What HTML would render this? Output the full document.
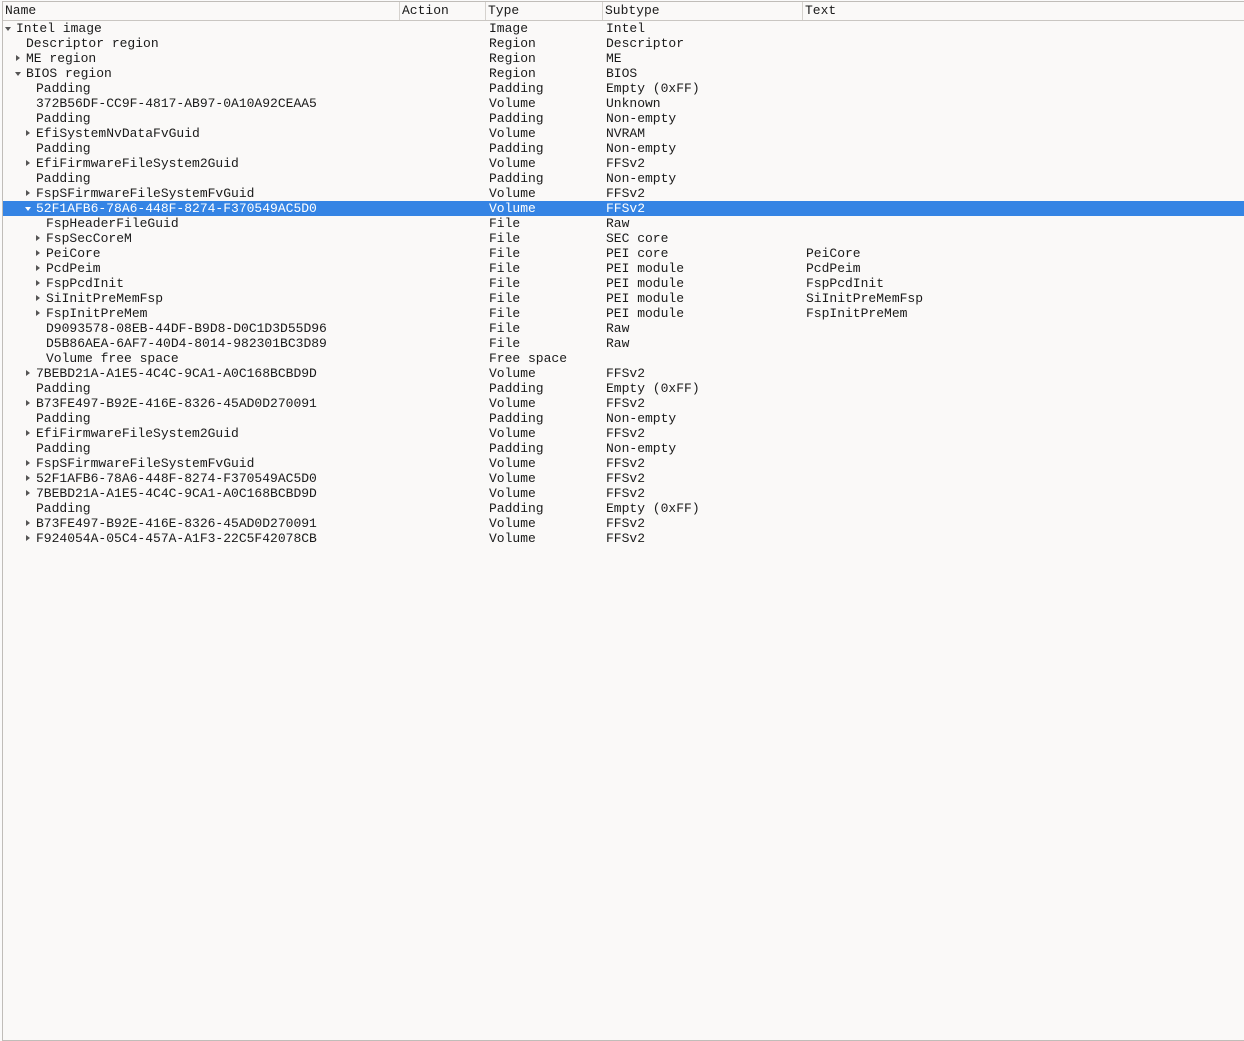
<!DOCTYPE html>
<html><head><style>
body{margin:0;width:1244px;height:1041px;background:#fafafa;overflow:hidden;position:relative;font-family:"Liberation Mono",monospace;font-size:13px;color:#1a1a1a}
#frame{position:absolute;left:2px;top:1px;width:1244px;height:1038px;border-left:1px solid #c0bdb9;border-top:1px solid #c0bdb9;border-bottom:1px solid #c0bdb9;background:#faf9f8}
.hdr{position:absolute;top:2px;height:18px;border-bottom:1px solid #c9c6c2;font-family:"Liberation Mono",monospace;font-size:13px;line-height:18px;left:3px;width:1241px;background:#faf9f8}
.hdr span{position:absolute;top:0;height:18px;padding-left:2px;border-right:1px solid #d5d2ce;box-sizing:border-box}
.row{position:absolute;left:3px;width:1241px;height:15px;line-height:15px;white-space:pre}
.row span{position:absolute;top:0}
.sel{background:#3584e4;color:#fff}
.a{position:absolute;top:5px;width:0;height:0}
.r{border-left:4px solid #555;border-top:3.5px solid transparent;border-bottom:3.5px solid transparent;top:4px}
.d{border-top:4px solid #555;border-left:3.5px solid transparent;border-right:3.5px solid transparent;top:6px}
.sel .d{border-top-color:#fff}
</style></head><body>
<div id="frame"></div>
<div class="hdr">
<span style="left:0;width:397px">Name</span>
<span style="left:397px;width:86px">Action</span>
<span style="left:483px;width:117px">Type</span>
<span style="left:600px;width:200px">Subtype</span>
<span style="left:800px;width:441px;border-right:none">Text</span>
</div>
<div id="rows"></div>
<script>
var R=[
[0,'d','Intel image','Image','Intel',''],
[1,'','Descriptor region','Region','Descriptor',''],
[1,'r','ME region','Region','ME',''],
[1,'d','BIOS region','Region','BIOS',''],
[2,'','Padding','Padding','Empty (0xFF)',''],
[2,'','372B56DF-CC9F-4817-AB97-0A10A92CEAA5','Volume','Unknown',''],
[2,'','Padding','Padding','Non-empty',''],
[2,'r','EfiSystemNvDataFvGuid','Volume','NVRAM',''],
[2,'','Padding','Padding','Non-empty',''],
[2,'r','EfiFirmwareFileSystem2Guid','Volume','FFSv2',''],
[2,'','Padding','Padding','Non-empty',''],
[2,'r','FspSFirmwareFileSystemFvGuid','Volume','FFSv2',''],
[2,'d','52F1AFB6-78A6-448F-8274-F370549AC5D0','Volume','FFSv2','',1],
[3,'','FspHeaderFileGuid','File','Raw',''],
[3,'r','FspSecCoreM','File','SEC core',''],
[3,'r','PeiCore','File','PEI core','PeiCore'],
[3,'r','PcdPeim','File','PEI module','PcdPeim'],
[3,'r','FspPcdInit','File','PEI module','FspPcdInit'],
[3,'r','SiInitPreMemFsp','File','PEI module','SiInitPreMemFsp'],
[3,'r','FspInitPreMem','File','PEI module','FspInitPreMem'],
[3,'','D9093578-08EB-44DF-B9D8-D0C1D3D55D96','File','Raw',''],
[3,'','D5B86AEA-6AF7-40D4-8014-982301BC3D89','File','Raw',''],
[3,'','Volume free space','Free space','',''],
[2,'r','7BEBD21A-A1E5-4C4C-9CA1-A0C168BCBD9D','Volume','FFSv2',''],
[2,'','Padding','Padding','Empty (0xFF)',''],
[2,'r','B73FE497-B92E-416E-8326-45AD0D270091','Volume','FFSv2',''],
[2,'','Padding','Padding','Non-empty',''],
[2,'r','EfiFirmwareFileSystem2Guid','Volume','FFSv2',''],
[2,'','Padding','Padding','Non-empty',''],
[2,'r','FspSFirmwareFileSystemFvGuid','Volume','FFSv2',''],
[2,'r','52F1AFB6-78A6-448F-8274-F370549AC5D0','Volume','FFSv2',''],
[2,'r','7BEBD21A-A1E5-4C4C-9CA1-A0C168BCBD9D','Volume','FFSv2',''],
[2,'','Padding','Padding','Empty (0xFF)',''],
[2,'r','B73FE497-B92E-416E-8326-45AD0D270091','Volume','FFSv2',''],
[2,'r','F924054A-05C4-457A-A1F3-22C5F42078CB','Volume','FFSv2','']];
var h='';
R.forEach(function(r,i){
var x=13+10*r[0];
h+='<div class="row'+(r[6]?' sel':'')+'" style="top:'+(21+15*i)+'px">'+
(r[1]?'<i class="a '+r[1]+'" style="left:'+(x-11+(r[1]=='r'?1:0))+'px"></i>':'')+
'<span style="left:'+x+'px">'+r[2]+'</span><span style="left:486px">'+r[3]+'</span><span style="left:603px">'+r[4]+'</span><span style="left:803px">'+r[5]+'</span></div>';
});
document.getElementById('rows').innerHTML=h;
</script>
</body></html>
